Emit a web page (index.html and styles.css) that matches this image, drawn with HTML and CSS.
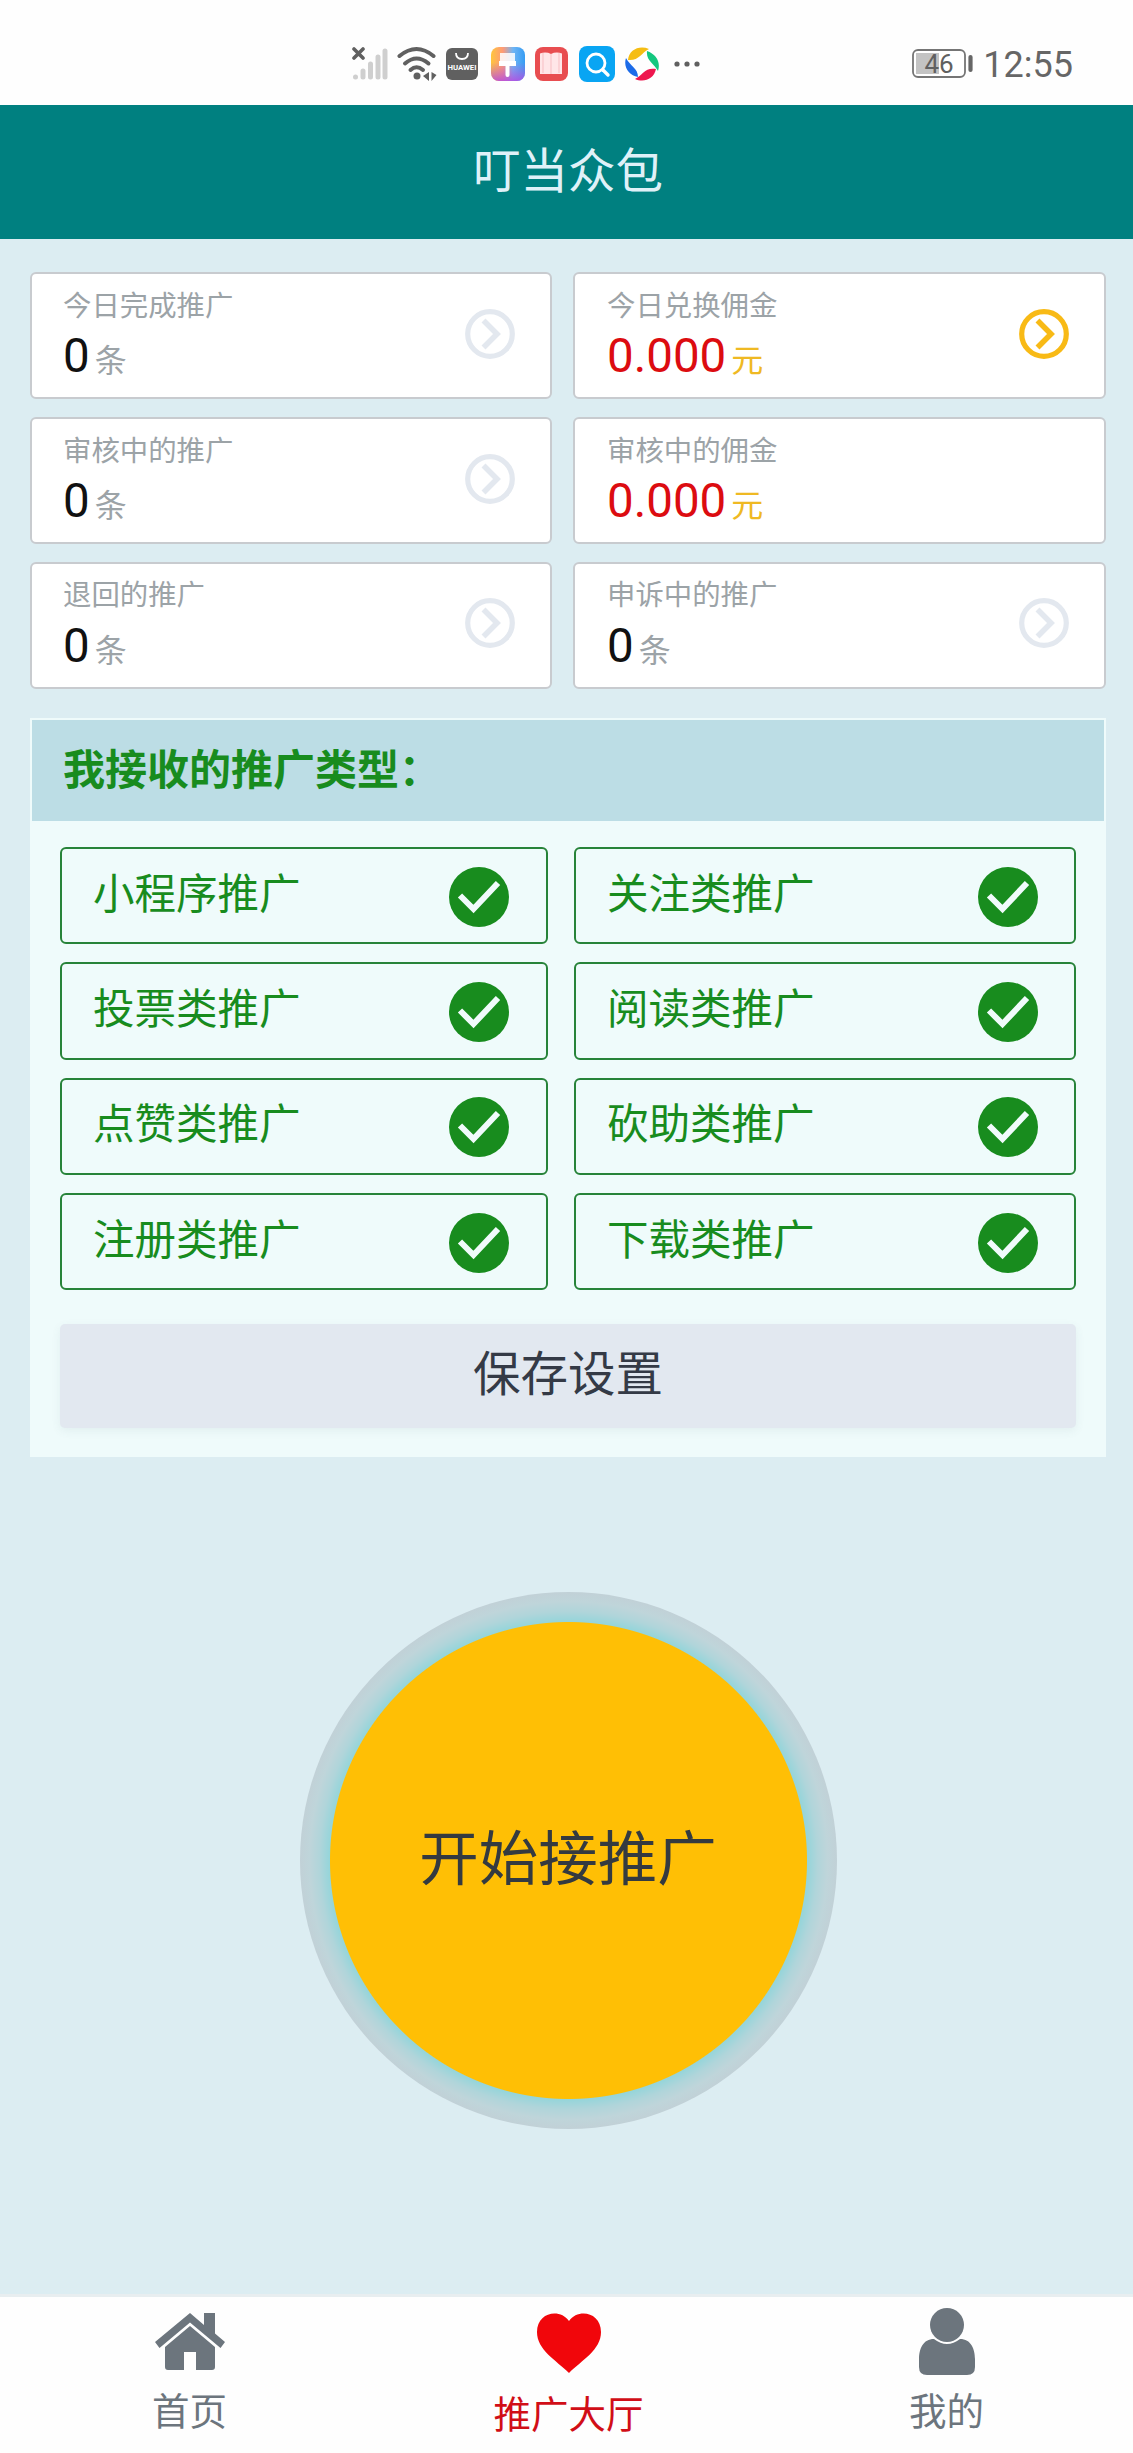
FILE: index.html
```html
<!DOCTYPE html>
<html lang="zh-CN">
<head>
<meta charset="utf-8">
<title>叮当众包</title>
<link rel="stylesheet" href="styles.css">
</head>
<body>
<svg class="defs" width="0" height="0">
  <symbol id="arrow" viewBox="0 0 50 50"><circle cx="25" cy="25" r="22.3" fill="none" stroke="currentColor" stroke-width="5.2"/><path d="M18.500 11.500 32 25 18.500 38.500" fill="none" stroke="currentColor" stroke-width="5.600"/></symbol>
  <symbol id="check" viewBox="0 0 60 60"><circle cx="30" cy="30" r="30" fill="#188c1e"/><path d="M11 28.500 24.500 42 49 16" fill="none" stroke="#f0fbfb" stroke-width="6"/></symbol>
</svg>

<header class="status">
  <div class="status-icons">
    <svg width="36" height="36" viewBox="0 0 36 36"><g stroke="#cfcfcf" stroke-width="5" stroke-linecap="round"><path d="M3.500 31v0M11 25v6M18.500 18v13M26 11v20M33 5v26"/></g><path d="M2 3l9 9M11 3l-9 9" stroke="#606060" stroke-width="3.600" stroke-linecap="round"/></svg>
    <svg width="40" height="36" viewBox="0 0 40 36"><g fill="none" stroke="#606060" stroke-width="4" stroke-linecap="round"><path d="M2.500 10Q19.500-4 36.500 10"/><path d="M8 17.500Q19.500 7.500 31.500 17.500"/><path d="M13.500 24Q19.500 18.500 26 24"/></g><circle cx="20" cy="30" r="3.500" fill="#606060"/><path d="M32 26v9l-6-5zM34.500 26v9l5-6z" fill="#606060"/></svg>
    <svg width="32" height="32" viewBox="0 0 32 32"><rect width="32" height="32" rx="6" fill="#606060"/><path d="M10 5q0 6 6 6t6-6" fill="none" stroke="#fff" stroke-width="1.800"/><text x="16" y="21.800" text-anchor="middle" textLength="29" lengthAdjust="spacingAndGlyphs" class="brand">HUAWEI</text></svg>
    <svg width="34" height="34" viewBox="0 0 34 34"><defs><linearGradient id="ga" x1="0" x2="1"><stop offset="0" stop-color="#ffc53d"/><stop offset=".35" stop-color="#ff9a76"/><stop offset=".65" stop-color="#6eb5f5"/><stop offset="1" stop-color="#359cf3"/></linearGradient><linearGradient id="gb" x1="0" y1="0" x2="0" y2="1"><stop offset=".45" stop-color="#b653dd" stop-opacity="0"/><stop offset="1" stop-color="#b64be0" stop-opacity=".85"/></linearGradient></defs><rect width="34" height="34" rx="8" fill="url(#ga)"/><rect width="34" height="34" rx="8" fill="url(#gb)"/><path d="M9 6h15v13H9z" fill="#fff" opacity=".85"/><path d="M8 14h17v5h-6.500v9a2 2 0 0 1-4 0v-9H8z" fill="#fff"/></svg>
    <svg width="33" height="34" viewBox="0 0 33 34"><rect width="33" height="34" rx="8" fill="#e84d50"/><path d="M5 6.500q6-2 11 .5 5-2.500 11-.5V27H5z" fill="#ffe6e8"/><path d="M8 6v20M24 6v20M16 7v20" stroke="#f7bec3"/></svg>
    <svg width="36" height="36" viewBox="0 0 36 36"><rect width="36" height="36" rx="8" fill="#09a5f3"/><circle cx="17" cy="17" r="9" fill="none" stroke="#fff" stroke-width="2.800"/><path d="M24 24l5 5" stroke="#fff" stroke-width="3.400" stroke-linecap="round"/></svg>
    <svg width="34" height="34" viewBox="0 0 34 34"><path d="M3 13C4 3 14-2 24 2 16 6 14 14 3 13z" fill="#f5bd13"/><path d="M22 4c9 3 14 11 11 20-4-8-12-10-11-20z" fill="#14c77f"/><path d="M31 22c-2 10-12 14-21 10 8-4 10-12 21-10z" fill="#ee174e"/><path d="M1 11c4 8 12 10 12 19C4 28-2 20 1 11z" fill="#1c6be8"/></svg>
    <svg class="more" width="26" height="6" viewBox="0 0 26 6"><g fill="#606060"><circle cx="3" cy="3" r="2.600"/><circle cx="13" cy="3" r="2.600"/><circle cx="23" cy="3" r="2.600"/></g></svg>
  </div>
  <div class="status-right">
    <svg width="62" height="30" viewBox="0 0 62 30"><rect x="1" y="1" width="52" height="27" rx="5" fill="#fff" stroke="#757575" stroke-width="1.800"/><rect x="4" y="4" width="23" height="21" fill="#c3c3c3"/><path d="M58.500 8v13" stroke="#666" stroke-width="4.200" stroke-linecap="round"/><text x="27" y="23.500" text-anchor="middle" class="battery">46</text></svg>
    <span class="clock">12:55</span>
  </div>
</header>
<h1 class="title">叮当众包</h1>

<main class="content">
  <section class="stats">
    <div class="card"><div><p class="label">今日完成推广</p><p class="value">0<span class="unit">条</span></p></div><svg class="arrow"><use href="#arrow"/></svg></div>
    <div class="card"><div><p class="label">今日兑换佣金</p><p class="value money">0.000<span class="unit">元</span></p></div><svg class="arrow gold"><use href="#arrow"/></svg></div>
    <div class="card"><div><p class="label">审核中的推广</p><p class="value">0<span class="unit">条</span></p></div><svg class="arrow"><use href="#arrow"/></svg></div>
    <div class="card"><div><p class="label">审核中的佣金</p><p class="value money">0.000<span class="unit">元</span></p></div></div>
    <div class="card"><div><p class="label">退回的推广</p><p class="value">0<span class="unit">条</span></p></div><svg class="arrow"><use href="#arrow"/></svg></div>
    <div class="card"><div><p class="label">申诉中的推广</p><p class="value">0<span class="unit">条</span></p></div><svg class="arrow"><use href="#arrow"/></svg></div>
  </section>

  <section class="panel">
    <h2 class="panel-title">我接收的推广类型：</h2>
    <div class="types">
      <div class="type"><span>小程序推广</span><svg class="check"><use href="#check"/></svg></div>
      <div class="type"><span>关注类推广</span><svg class="check"><use href="#check"/></svg></div>
      <div class="type"><span>投票类推广</span><svg class="check"><use href="#check"/></svg></div>
      <div class="type"><span>阅读类推广</span><svg class="check"><use href="#check"/></svg></div>
      <div class="type"><span>点赞类推广</span><svg class="check"><use href="#check"/></svg></div>
      <div class="type"><span>砍助类推广</span><svg class="check"><use href="#check"/></svg></div>
      <div class="type"><span>注册类推广</span><svg class="check"><use href="#check"/></svg></div>
      <div class="type"><span>下载类推广</span><svg class="check"><use href="#check"/></svg></div>
    </div>
    <button class="save">保存设置</button>
  </section>

  <button class="start">开始接推广</button>
</main>

<nav class="tabs">
  <a class="tab"><svg width="72" height="68" viewBox="0 0 72 68"><g fill="#6c757d"><path d="M36 5 1 34l4.500 6L36 14.500 66.500 40l4.500-6-10-8.500V5H50v12z"/><path d="M36 18 11 39v20q0 3 3 3h16V44h12v18h16q3 0 3-3V39z"/></g></svg><span>首页</span></a>
  <a class="tab active"><svg width="66" height="68" viewBox="0 0 66 68"><path d="M33 62C20 49 1 39 1 21 1 1 24-3 33 10 42-3 65 1 65 21c0 18-19 28-32 41z" fill="#f1060b"/></svg><span>推广大厅</span></a>
  <a class="tab"><svg width="56" height="68" viewBox="0 0 56 68"><g fill="#6c757d"><circle cx="28" cy="17" r="17"/><path d="M15 31q13 10 26 0c11 0 15 10 15 20v8q0 8-8 8H8q-8 0-8-8v-8c0-10 4-20 15-20z"/></g></svg><span>我的</span></a>
</nav>
</body>
</html>
```
FILE: styles.css
```css
* { box-sizing: border-box; margin: 0; padding: 0; }
body {
  width: 1133px;
  height: 2453px;
  display: flex;
  flex-direction: column;
  background: #dcedf2;
  font-family: "Noto Sans CJK SC", sans-serif;
  overflow: hidden;
}
svg { display: block; flex: none; }
.defs { position: absolute; }
button { border: 0; font-family: inherit; }

.status {
  height: 105px;
  padding: 22px 60px 0 352px;
  display: flex;
  justify-content: space-between;
  align-items: center;
  background: #fefefe;
}
.status-icons { display: flex; align-items: center; gap: 10.500px; }
.status-icons svg:nth-child(2) { margin: 0 -1px 0 -2px; }
.status-icons svg:nth-child(4) { margin-left: 2px; }
.status-icons .more { margin-left: 4px; }
.brand { font: bold 7px Roboto, sans-serif; fill: #fff; }
.battery { font: 26px Roboto, sans-serif; fill: #606060; }
.status-right { display: flex; align-items: center; gap: 9px; }
.clock { padding-top: 2px; font: 36px/40px Roboto, sans-serif; color: #666; }

.title {
  height: 134px;
  padding-left: 3px;
  line-height: 125px;
  text-align: center;
  background: #008080;
  color: #dff1f8;
  font-size: 47.500px;
  font-weight: 400;
}

.content { flex: 1; display: flex; flex-direction: column; align-items: center; padding: 33px 27px 0 30px; }
.stats {
  align-self: stretch;
  display: grid;
  grid-template-columns: 522px 533px;
  grid-auto-rows: 127px;
  gap: 18px 21px;
}
.card {
  display: flex;
  justify-content: space-between;
  padding: 12px 35px 0 32px;
  border: 2px solid #c8cbcf;
  border-radius: 6px;
  background: #fff;
}
.card:nth-child(odd) { padding-left: 31px; }
.label { font-size: 28.400px; line-height: 36px; color: #9ca3a7; }
.value { margin-top: 10px; display: flex; align-items: baseline; font: 47.500px/48px Roboto, sans-serif; color: #111; }
.unit { margin-left: 5px; font: 32px/40px "Noto Sans CJK SC", sans-serif; color: #9ca3a7; }
.money { color: #dc0c10; }
.money .unit { color: #efb923; }
.arrow { width: 50px; height: 50px; margin-top: 22.500px; color: #e3e8ef; }
.card:nth-child(n+5) .label { margin-top: -1px; }
.card:nth-child(n+5) .value { margin-top: 11px; }
.card:nth-child(n+5) .arrow { margin-top: 22px; }
.arrow.gold { color: #f8ba16; }

.panel {
  width: 1076px;
  height: 739px;
  margin-top: 29px;
  border: 2px solid #effbfb;
  background: #effbfb;
}
.panel-title {
  height: 101px;
  padding-left: 31px;
  line-height: 94px;
  background: #bcdde5;
  color: #188c1e;
  font-size: 42px;
  font-weight: 700;
}
.types {
  display: grid;
  grid-template-columns: 488px 502px;
  grid-auto-rows: 97.200px;
  gap: 18.200px 26px;
  margin: 26px 28px 0;
}
.type {
  display: flex;
  align-items: center;
  justify-content: space-between;
  padding: 0 36px 0 31px;
  border: 2px solid #278339;
  border-radius: 6px;
  color: #188c1e;
  font-size: 41.500px;
}
.type:nth-child(odd) { padding-right: 37px; }
.type span { line-height: 60px; margin-bottom: 10px; }
.check { width: 60px; height: 60px; margin-top: 2px; }
.save {
  display: block;
  width: 1016px;
  height: 104px;
  margin: 33.500px 28px 0;
  padding-bottom: 10px;
  border-radius: 5px;
  background: #e2e8f0;
  box-shadow: 0 3px 10px rgba(80, 100, 120, .08);
  color: #343a46;
  font-size: 47.500px;
}

.start {
  width: 537px;
  height: 537px;
  margin-top: 135px;
  padding-bottom: 14px;
  border: 29.500px solid transparent;
  border-radius: 50%;
  background:
    radial-gradient(circle closest-side, #ffbf05 238px, #95d5da 239px, #b0d5da 249px, #bfd5da 259px, #c1d1d7 268px) border-box;
  color: #343a40;
  font-size: 59.500px;
}

.tabs {
  height: 159px;
  display: grid;
  grid-template-columns: 379px 379px 375px;
  border-top: 3px solid #e8eef0;
  background: #fefefe;
}
.tab { display: flex; flex-direction: column; align-items: center; padding-top: 11px; color: #6c757d; font-size: 37.500px; }
.tab:last-child { padding-left: 2px; }
.tab span { margin-top: 8px; line-height: 50px; }
.active { padding-top: 14px; color: #d10e17; }
```
